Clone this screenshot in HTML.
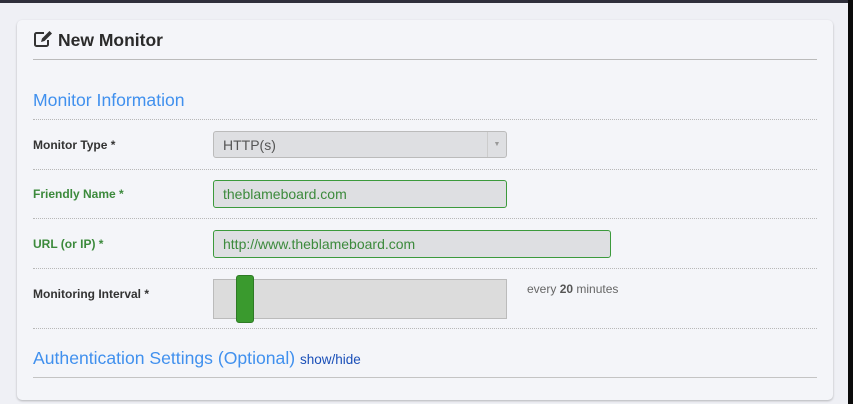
<!DOCTYPE html>
<html><head><style>
*{margin:0;padding:0;box-sizing:border-box}
body{width:853px;height:404px;background:#eff0f5;font-family:"Liberation Sans",Arial,sans-serif;position:relative;overflow:hidden}
.top{position:absolute;left:0;top:0;width:853px;height:3px;background:#2f2f3b}
.rside{position:absolute;left:848px;top:0;width:5px;height:404px;background:#0a0a0a}
.card{position:absolute;left:17px;top:20px;width:816px;height:380px;background:#f4f5f9;border-radius:5px;box-shadow:0 1px 2px rgba(0,0,0,.25)}
.a{position:absolute}
.hr{position:absolute;left:33px;width:784px;height:0}
.dot{border-top:1px dotted #b8b8b8}
.lbl{position:absolute;left:33px;font-size:12px;font-weight:bold;color:#333}
.g{color:#3c8a3c}
.inp{position:absolute;left:213px;height:28px;border:1px solid #bbb;border-radius:3px;background:#dedfe2;font-size:14px;padding:5px 0 0 9px;color:#555}
.ok{border-color:#3c9a3c;color:#3c8a3c}
.h{position:absolute;left:33px;font-size:17.6px;color:#4090ee}
</style></head><body>
<div class="top"></div><div class="rside"></div>
<div class="card"></div>
<svg class="a" style="left:33px;top:30px" width="20" height="18" viewBox="0 0 20 18"><path d="M11 3H3.5A1.5 1.5 0 0 0 2 4.5v10A1.5 1.5 0 0 0 3.5 16h10a1.5 1.5 0 0 0 1.5-1.5V10" fill="none" stroke="#333" stroke-width="2"/><path d="M8 12l1-3.5 7.5-7.5 2.5 2.5-7.5 7.5z" fill="#333"/></svg>
<div class="a" style="left:58px;top:30px;font-size:17.5px;font-weight:bold;color:#2a2a2a">New Monitor</div>
<div class="hr" style="top:59px;border-top:1px solid #bbb"></div>
<div class="h" style="top:90px">Monitor Information</div>
<div class="hr dot" style="top:119px"></div>
<div class="lbl" style="top:138px">Monitor Type *</div>
<div class="inp" style="top:131px;width:294px;height:27px;padding-top:5px">HTTP(s)<div class="a" style="right:0;top:0;width:19px;height:25px;border-left:1px solid #ccc;font-size:7px;color:#999;text-align:center;padding-top:9px">▼</div></div>
<div class="hr dot" style="top:169px"></div>
<div class="lbl g" style="top:187px">Friendly Name *</div>
<div class="inp ok" style="top:180px;width:294px">theblameboard.com</div>
<div class="hr dot" style="top:218px"></div>
<div class="lbl g" style="top:237px">URL (or IP) *</div>
<div class="inp ok" style="top:230px;width:398px">http://www.theblameboard.com</div>
<div class="hr dot" style="top:268px"></div>
<div class="lbl" style="top:287px">Monitoring Interval *</div>
<div class="a" style="left:213px;top:279px;width:294px;height:40px;background:#dcdcdc;border:1px solid #bbb"></div>
<div class="a" style="left:236px;top:275px;width:18px;height:48px;background:#3a9a2e;border:1px solid #2e7a25;border-radius:3px"></div>
<div class="a" style="left:527px;top:282px;font-size:12px;color:#666">every <b style="color:#555">20</b> minutes</div>
<div class="hr dot" style="top:328px"></div>
<div class="h" style="top:348px">Authentication Settings (Optional) <span style="font-size:13.5px;color:#1a4fb8">show/hide</span></div>
<div class="hr" style="top:377px;border-top:1px solid #c4c4c4"></div>
</body></html>
